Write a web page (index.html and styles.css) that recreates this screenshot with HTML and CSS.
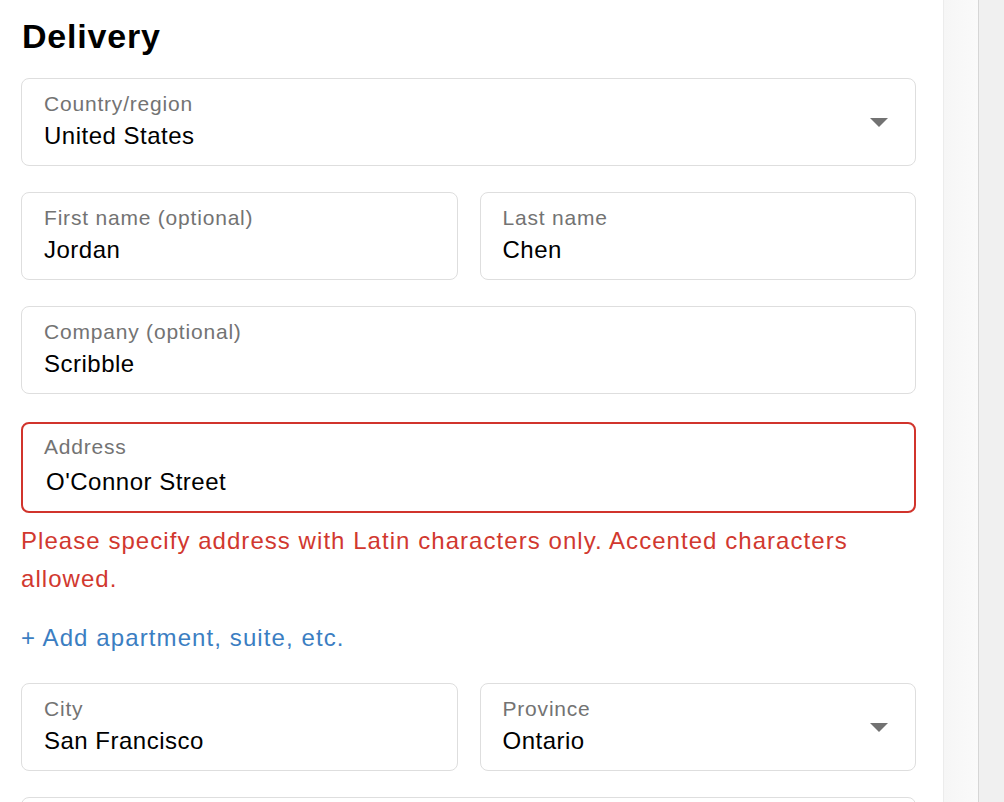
FILE: index.html
```html
<!DOCTYPE html>
<html lang="en">
<head>
<meta charset="utf-8">
<title>Delivery</title>
<link rel="stylesheet" href="styles.css">
</head>
<body>
<div class="page">
  <main class="main">
    <h2 class="title">Delivery</h2>
    <div class="field select">
      <div class="field-text">
        <span class="label">Country/region</span>
        <span class="value">United States</span>
      </div>
      <span class="caret"></span>
    </div>
    <div class="row">
      <div class="field">
        <div class="field-text">
          <span class="label">First name (optional)</span>
          <span class="value">Jordan</span>
        </div>
      </div>
      <div class="field">
        <div class="field-text">
          <span class="label">Last name</span>
          <span class="value">Chen</span>
        </div>
      </div>
    </div>
    <div class="field">
      <div class="field-text">
        <span class="label">Company (optional)</span>
        <span class="value">Scribble</span>
      </div>
    </div>
    <div class="field error">
      <div class="field-text">
        <span class="label">Address</span>
        <span class="value">O'Connor Street</span>
      </div>
    </div>
    <p class="error-msg">Please specify address with Latin characters only. Accented characters allowed.</p>
    <a class="add-link" href="#">+ Add apartment, suite, etc.</a>
    <div class="row city-row">
      <div class="field">
        <div class="field-text">
          <span class="label">City</span>
          <span class="value">San Francisco</span>
        </div>
      </div>
      <div class="field select">
        <div class="field-text">
          <span class="label">Province</span>
          <span class="value">Ontario</span>
        </div>
        <span class="caret"></span>
      </div>
    </div>
    <div class="field">
      <div class="field-text">
        <span class="label">Postal code</span>
        <span class="value">94107</span>
      </div>
    </div>
  </main>
  <div class="track"></div>
  <aside class="side"></aside>
</div>
</body>
</html>
```

FILE: styles.css
```css
html, body {
  margin: 0;
  padding: 0;
  height: 100%;
  overflow: hidden;
  background: #ffffff;
}

body {
  font-family: "Liberation Sans", Arial, sans-serif;
  color: #000;
}

.page {
  display: flex;
  height: 802px;
}

.main {
  width: 943px;
  box-sizing: border-box;
  padding: 14px 27px 0 21px;
  display: flex;
  flex-direction: column;
  gap: 26px;
  overflow: hidden;
}

.title {
  margin: 0 0 -6px 1px;
  font-size: 34px;
  line-height: 44px;
  font-weight: 700;
  letter-spacing: 0.8px;
}

.track {
  width: 34px;
  background: linear-gradient(to right, #f6f6f6, #fafafa);
  border-left: 1px solid #ececec;
}

.side {
  flex: 1;
  background: #f0f0f0;
  border-left: 1px solid #d6d6d6;
}

.row {
  display: flex;
  gap: 22px;
}

.row > .field {
  flex: 1;
}

.city-row {
  margin-top: 4px;
}

.field {
  height: 88px;
  box-sizing: border-box;
  border: 1px solid #dedede;
  border-radius: 8px;
  padding: 12px 22px 0;
  display: flex;
  align-items: flex-start;
  flex-shrink: 0;
}

.field-text {
  flex: 1;
  display: flex;
  flex-direction: column;
  gap: 5px;
}

.label {
  font-size: 21px;
  line-height: 25px;
  color: #737373;
  letter-spacing: 0.8px;
}

.value {
  font-size: 24px;
  line-height: 30px;
  color: #000;
  letter-spacing: 0.5px;
}

.caret {
  align-self: center;
  margin-top: -12px;
  width: 0;
  height: 0;
  border-left: 9px solid transparent;
  border-right: 9px solid transparent;
  border-top: 9px solid #727272;
  margin-right: 5px;
}

.field.error {
  margin-top: 2px;
  border: 2px solid #d1342c;
  padding: 10px 21px 0;
  height: 91px;
}

.field.error .value {
  margin-left: 2px;
  margin-top: 3px;
}

.error-msg {
  margin: -17px 0 0 0;
  font-size: 24px;
  line-height: 38px;
  color: #d1382f;
  letter-spacing: 1.05px;
}

.add-link {
  margin-top: -1px;
  font-size: 24px;
  line-height: 30px;
  color: #3b7ec2;
  text-decoration: none;
  letter-spacing: 1.1px;
  align-self: flex-start;
}
```
